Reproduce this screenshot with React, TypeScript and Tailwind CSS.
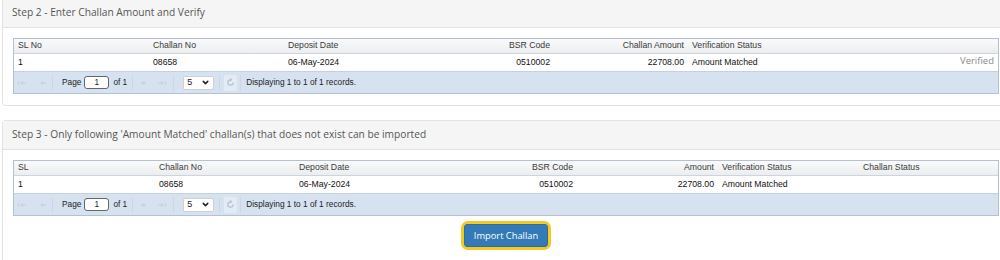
import { ChevronDown } from 'lucide-react';

type Col = { label: string; w: string; align?: 'right' | 'left' };

const grid1: Col[] = [
  { label: 'SL No', w: 'w-[135px]' },
  { label: 'Challan No', w: 'w-[135px]' },
  { label: 'Deposit Date', w: 'w-[172px]' },
  { label: 'BSR Code', w: 'w-[98px]', align: 'right' },
  { label: 'Challan Amount', w: 'w-[134px]', align: 'right' },
  { label: 'Verification Status', w: 'flex-1' },
];

const grid2: Col[] = [
  { label: 'SL', w: 'w-[141px]' },
  { label: 'Challan No', w: 'w-[140px]' },
  { label: 'Deposit Date', w: 'w-[182px]' },
  { label: 'BSR Code', w: 'w-[100px]', align: 'right' },
  { label: 'Amount', w: 'w-[141px]', align: 'right' },
  { label: 'Verification Status', w: 'w-[141px]' },
  { label: 'Challan Status', w: 'flex-1' },
];

const row1 = ['1', '08658', '06-May-2024', '0510002', '22708.00', 'Amount Matched'];
const row2 = ['1', '08658', '06-May-2024', '0510002', '22708.00', 'Amount Matched', ''];

function NavIcon({ dir, bar }: { dir: 'l' | 'r'; bar?: boolean }) {
  return (
    <svg width="10" height="8" viewBox="0 0 10 8" className="text-[#c8d0da]">
      {dir === 'l' ? (
        <>
          {bar && <rect x="1" y="2" width="1" height="4" fill="currentColor" />}
          <path d="M3 4 L6 2 L6 6 Z" fill="currentColor" />
          <rect x="6" y="3.5" width="3" height="1" fill="currentColor" />
        </>
      ) : (
        <>
          <rect x="1" y="3.5" width="3" height="1" fill="currentColor" />
          <path d="M7 4 L4 2 L4 6 Z" fill="currentColor" />
          {bar && <rect x="8" y="2" width="1" height="4" fill="currentColor" />}
        </>
      )}
    </svg>
  );
}

function Sep({ className }: { className: string }) {
  return <div className={`h-[16px] w-px bg-[#cbd7e6] ${className}`} />;
}

function Pager() {
  return (
    <div className="flex h-[22px] items-center bg-[#d6e2f0] border-t border-[#c5d1df] pl-[3px] text-[8.3px] text-[#222]">
      <div className="flex w-[30px] items-center justify-between">
        <NavIcon dir="l" bar />
        <NavIcon dir="l" />
      </div>
      <Sep className="ml-[5px] mr-[9px]" />
      <span>Page</span>
      <div className="ml-[3px] flex h-[13px] w-[25px] items-center justify-center rounded-[3px] border border-[#666] bg-white leading-none">1</div>
      <span className="ml-[4px]">of 1</span>
      <Sep className="ml-[5px] mr-[6px]" />
      <div className="flex w-[28px] items-center justify-between">
        <NavIcon dir="r" />
        <NavIcon dir="r" bar />
      </div>
      <Sep className="ml-[6px] mr-[9px]" />
      <div className="flex h-[14px] w-[31px] items-center justify-between rounded-[2px] border border-[#d0d0d0] bg-white px-[3px] text-[9px] leading-none">
        <span>5</span>
        <ChevronDown size={9} strokeWidth={4} className="text-[#222]" />
      </div>
      <Sep className="ml-[5px] mr-[4px]" />
      <div className="flex h-[16px] w-[13px] items-center justify-center rounded-[2px] bg-[#e3ebf5]">
        <svg width="9" height="9" viewBox="0 0 10 10" fill="none" stroke="#b8c2ce" strokeWidth="1.4">
          <path d="M8 5 A3 3 0 1 1 5 2" />
          <path d="M4.5 0.5 L6 2 L4.5 3.5" />
        </svg>
      </div>
      <Sep className="ml-[3px] mr-[5px]" />
      <span>Displaying 1 to 1 of 1 records.</span>
    </div>
  );
}

function Grid({ cols, row, extra }: { cols: Col[]; row: string[]; extra?: string }) {
  return (
    <div className="border border-[#b3c1d1] text-[8.7px] font-['Liberation_Sans',Arial,sans-serif]">
      <div className="flex h-[15px] items-center bg-gradient-to-b from-[#fafafa] to-[#ebedf0] border-b border-[#d0d4d9] text-[#3a3a3a]">
        {cols.map((c) => (
          <div key={c.label} className={`${c.w} px-[4px] ${c.align === 'right' ? 'text-right' : ''}`}>
            {c.label}
          </div>
        ))}
      </div>
      <div className="flex h-[17px] items-center bg-white text-[#111]">
        {cols.map((c, i) => (
          <div key={c.label} className={`${c.w} px-[4px] ${c.align === 'right' ? 'text-right' : ''} ${i === cols.length - 1 ? 'flex justify-between' : ''}`}>
            <span>{row[i]}</span>
            {i === cols.length - 1 && extra && <span className="text-[9.5px] text-[#8a8a8a] font-['Open_Sans',sans-serif] leading-none">{extra}</span>}
          </div>
        ))}
      </div>
      <Pager />
    </div>
  );
}

function Panel({ title, children, className }: { title: string; children: React.ReactNode; className?: string }) {
  return (
    <div className={`ml-[2px] w-[1010px] rounded-[3px] border border-[#e3e3e3] bg-white ${className ?? ''}`}>
      <div className="flex h-[29px] items-center border-b border-[#e3e3e3] bg-[#f5f5f5] px-[9px] text-[10.2px] text-[#555] font-['Open_Sans',sans-serif]">
        {title}
      </div>
      <div className="pl-[10px] pr-[10px] pt-[10px]">{children}</div>
    </div>
  );
}

export default function App() {
  return (
    <div className="h-[260px] w-[1000px] overflow-hidden bg-white">
      <Panel title="Step 2 - Enter Challan Amount and Verify" className="-mt-[2px] pb-[11px]">
        <div className="w-[986px]">
          <Grid cols={grid1} row={row1} extra="Verified" />
        </div>
      </Panel>
      <Panel title="Step 3 - Only following 'Amount Matched' challan(s) that does not exist can be imported" className="mt-[14px] h-[160px]">
        <div className="w-[986px]">
          <Grid cols={grid2} row={row2} />
          <div className="flex justify-center pt-[5px]">
            <div className="rounded-[7px] border-[3px] border-[#f7c81e]">
              <button className="block h-[23px] w-[84px] rounded-[3px] border border-[#2e6da4] bg-[#337ab7] text-[9.3px] text-white font-['Open_Sans',sans-serif]">
                Import Challan
              </button>
            </div>
          </div>
        </div>
      </Panel>
    </div>
  );
}
